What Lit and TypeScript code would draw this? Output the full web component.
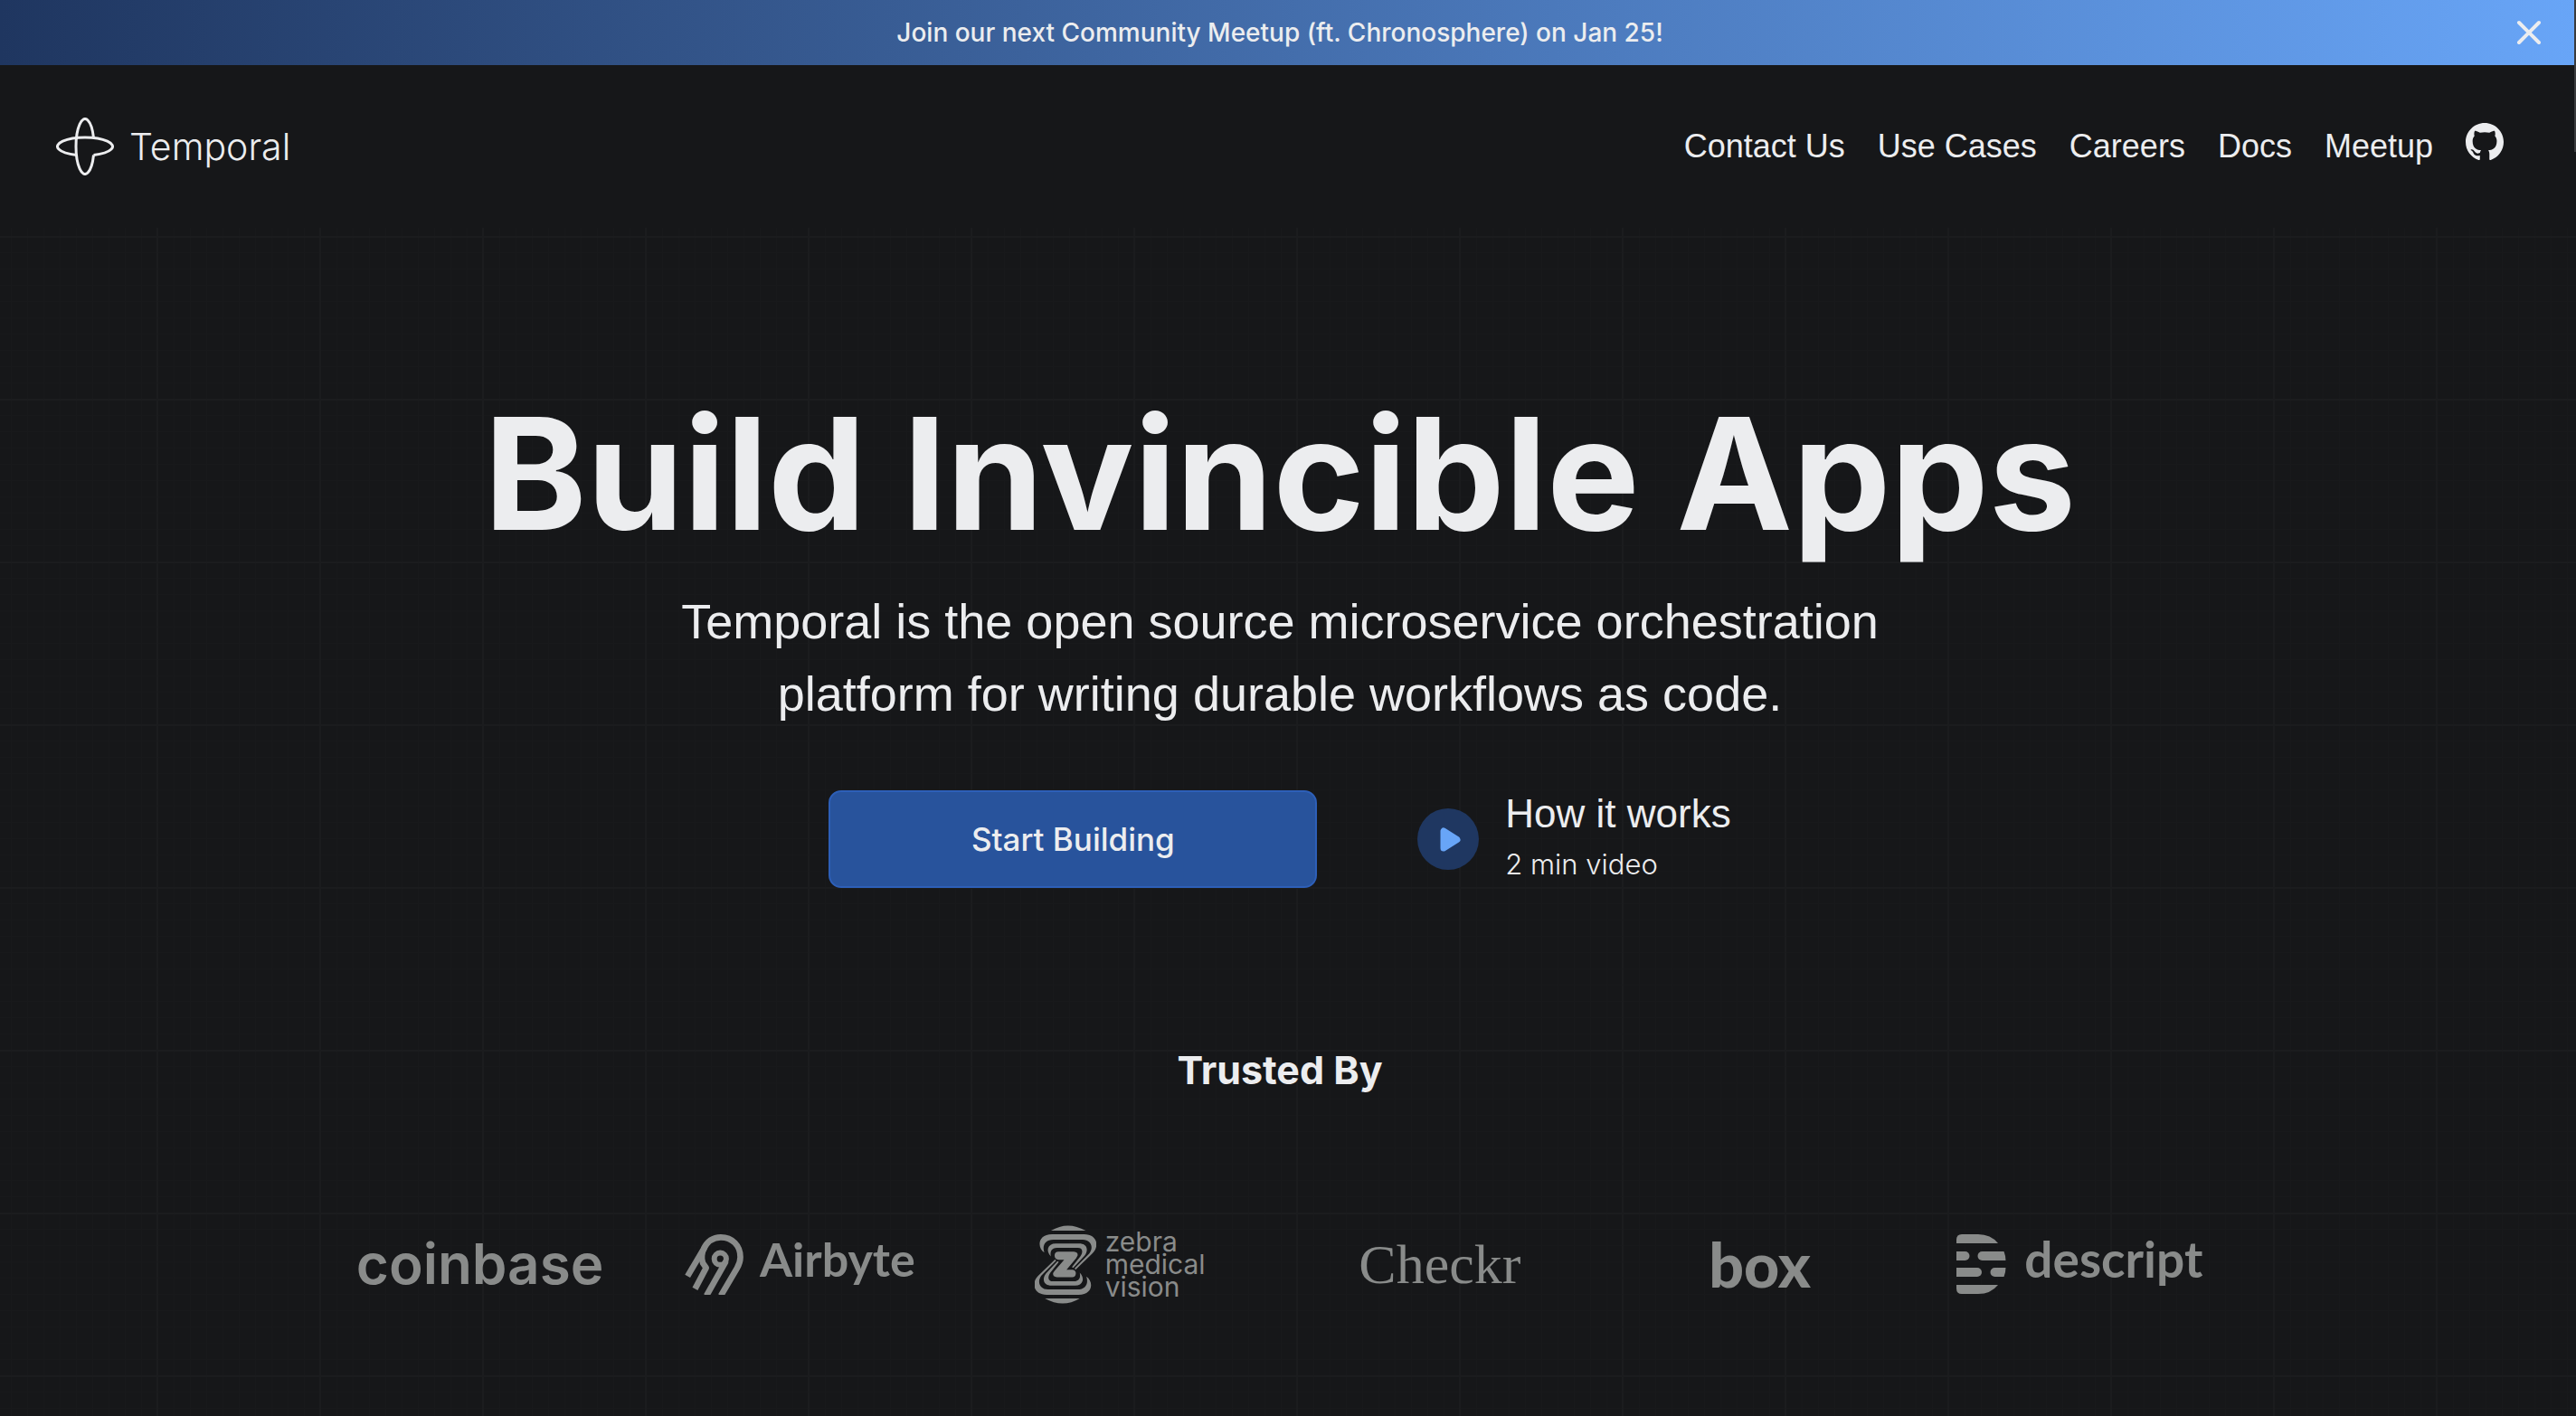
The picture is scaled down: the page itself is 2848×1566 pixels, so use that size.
import { LitElement, html, css, svg } from "lit";
import { customElement, state } from "lit/decorators.js";

const NAV = ["Contact Us", "Use Cases", "Careers", "Docs", "Meetup"];

const temporalMark = svg`<svg class="mark" viewBox="-32 -32 64 64" aria-hidden="true">
  <g fill="none" stroke="currentColor" stroke-width="3">
    <path d="M9.5 9.5A10 30.5 0 1 1 9.5 -9.5" />
    <path d="M-9.5 9.5A30.5 10 0 1 1 9.5 9.5" />
  </g>
</svg>`;

const githubMark = svg`<svg class="github-mark" viewBox="0 0 16 16" aria-hidden="true">
  <path fill="currentColor" d="M8 0C3.58 0 0 3.58 0 8c0 3.54 2.29 6.53 5.47 7.59.4.07.55-.17.55-.38 0-.19-.01-.82-.01-1.49-2.01.37-2.53-.49-2.69-.94-.09-.23-.48-.94-.82-1.13-.28-.15-.68-.52-.01-.53.63-.01 1.08.58 1.23.82.72 1.21 1.87.87 2.33.66.07-.52.28-.87.51-1.07-1.78-.2-3.64-.89-3.64-3.95 0-.87.31-1.59.82-2.15-.08-.2-.36-1.02.08-2.12 0 0 .67-.21 2.2.82.64-.18 1.32-.27 2-.27s1.36.09 2 .27c1.53-1.04 2.2-.82 2.2-.82.44 1.1.16 1.92.08 2.12.51.56.82 1.27.82 2.15 0 3.07-1.87 3.75-3.65 3.95.29.25.54.73.54 1.48 0 1.07-.01 1.93-.01 2.2 0 .21.15.46.55.38A8.01 8.01 0 0 0 16 8c0-4.42-3.58-8-8-8z" />
</svg>`;

const airbyteMark = svg`<svg class="airbyte-mark" viewBox="30 48 195 202" aria-hidden="true">
  <g fill="none" stroke="currentColor" stroke-width="20" stroke-linejoin="round">
    <path d="M39 188L92 98C104 72 124 58 150 58C188 58 215 86 215 124C215 138 211 149 204 161L150 253" />
    <path d="M96 92C86 108 84 130 90 144L101 160L64 230" />
    <path d="M167 138L102 253" />
    <circle cx="148" cy="130" r="20" stroke-width="18" />
  </g>
</svg>`;

const zebraHalf = svg`
  <path d="M84 50Q140 16 200 50Z" />
  <path d="M62 123C38 108 38 62 88 62H194C240 62 246 104 222 126L166 180L163 176L212 126C228 104 216 80 190 80H92C64 80 54 100 62 123Z" />
  <path d="M84 136C66 118 72 93 100 93H178C208 93 210 120 194 136L158 174L154 171L182 136C192 122 190 107 174 107H104C86 107 80 120 84 136Z" />`;

const zebraMark = svg`<svg class="zebra-mark" viewBox="30 33 205 260" aria-hidden="true">
  <g fill="currentColor">
    ${zebraHalf}
    <g transform="rotate(180 132 163)">${zebraHalf}</g>
    <path d="M109 120H160Q175 121 173 133L168 142L136 180H156Q168 182 167 193Q166 205 155 205H104Q90 205 91 192L96 184L128 147H110Q96 145 96 132Q97 120 109 120Z" />
  </g>
</svg>`;

const descriptMark = svg`<svg class="descript-mark" viewBox="0 0 55 66" aria-hidden="true">
  <g fill="currentColor">
    <path d="M0 10V6Q0 0 6 0H24Q38 0 46 10Z" />
    <path d="M0 19H9.500A5 5 0 0 1 9.500 29H0Z" />
    <path d="M28.500 19H52.500Q54.500 24 54.500 29H28.500A5 5 0 0 1 28.500 19Z" />
    <path d="M0 37H23A5 5 0 0 1 23 47H0Z" />
    <path d="M42.500 37H54.500Q54.500 42 52.500 47H42.500A5 5 0 0 1 42.500 37Z" />
    <path d="M0 56H46Q38 66 24 66H6Q0 66 0 60Z" />
  </g>
</svg>`;

@customElement("app-root")
export class AppRoot extends LitElement {
  @state() private bannerOpen = true;

  static styles = css`
    :host {
      --ink: #ecedef;
      --surface: #161719;
      --major: #1b1c1e;
      --minor: #18191b;
      display: block;
      color: var(--ink);
      background: var(--surface);
      font-family: "Liberation Sans", Arial, sans-serif;
    }
    * { box-sizing: border-box; }
    a { color: inherit; text-decoration: none; }
    button { border: 0; padding: 0; background: none; color: inherit; font: inherit; cursor: pointer; }
    svg { display: block; flex: none; }

    .page { position: relative; display: flex; flex-direction: column; min-height: 100vh; overflow: hidden; }
    .scroll-thumb {
      position: absolute; top: 0; right: 0; width: 2px; height: 168px;
      background: #3a3b3d;
    }

    .banner {
      display: grid; grid-template-columns: 64px 1fr 64px; align-items: center;
      height: 72px; padding: 0 20px 0 2px;
      background: linear-gradient(90deg, #1f3660, #68a5f7);
      font-family: Inter, sans-serif; font-size: 28px; font-weight: 500; line-height: 36px;
    }
    .banner-text { grid-column: 2; text-align: center; }
    .close { display: grid; place-items: center; width: 64px; height: 64px; }
    .close svg { width: 28px; height: 28px; }

    .header {
      display: flex; align-items: center; justify-content: space-between;
      height: 180px; padding: 0 80px 0 62px;
    }
    .brand {
      display: flex; align-items: center; gap: 17px;
      font-family: Inter, sans-serif; font-size: 41px; font-weight: 300; line-height: 48px;
    }
    .mark { width: 64px; height: 64px; }
    .nav { display: flex; align-items: center; gap: 36px; font-size: 36px; line-height: 44px; }
    .github { padding-bottom: 10px; }
    .github-mark { width: 42px; height: 42px; }

    .hero {
      flex: 1; display: flex; flex-direction: column; align-items: center;
      padding: 181px 18px 120px 0;
      background-image:
        linear-gradient(90deg, var(--major) 2px, transparent 2px),
        linear-gradient(var(--major) 2px, transparent 2px),
        linear-gradient(90deg, var(--minor) 1px, transparent 1px),
        linear-gradient(var(--minor) 1px, transparent 1px);
      background-size: 180px 180px, 180px 180px, 18px 18px, 18px 18px;
      background-position: 173px 9px, 173px 9px, 12px 9px, 12px 9px;
      text-align: center;
    }
    h1, h2, p { margin: 0; }
    h1, h2 { font-family: Inter, sans-serif; font-weight: 700; }
    h1 { font-size: 172px; line-height: 180px; }
    .lead { max-width: 1400px; margin-top: 34px; font-size: 54px; line-height: 80px; }
    .actions { display: flex; align-items: center; gap: 111px; margin-top: 67px; }
    .start {
      display: grid; place-items: center; width: 540px; height: 108px;
      border: 2px solid #2d5fb8; border-radius: 14px; background: #28539c;
      font-family: Inter, sans-serif; font-size: 35px; font-weight: 500;
    }
    .video { display: flex; align-items: center; gap: 29px; text-align: left; }
    .play { width: 68px; height: 68px; }
    .video-text { display: flex; flex-direction: column; gap: 4px; }
    .video-title { font-size: 44px; line-height: 52px; }
    .video-note { font-family: Inter, sans-serif; font-size: 31px; font-weight: 300; line-height: 52px; }

    h2 { margin-top: 173px; font-size: 43px; line-height: 56px; }
    .logos {
      display: grid; grid-template-columns: repeat(6, 1fr); align-items: center;
      width: 75%; min-height: 88px; margin: 137px 0 0; padding: 0;
      list-style: none; color: #898b8a; white-space: nowrap;
    }
    .logo { display: flex; align-items: center; justify-content: center; line-height: 88px; }
    .coinbase { font-family: Inter, sans-serif; font-size: 62px; font-weight: 600; }
    .airbyte { gap: 18px; font-family: Lato, sans-serif; font-size: 52px; font-weight: 700; }
    .airbyte-mark { width: 65px; height: 67px; }
    .zebra { gap: 10px; font-family: Inter, sans-serif; font-size: 30px; line-height: 25px; }
    .zebra-mark { width: 68px; height: 87px; }
    .zebra-text { display: flex; flex-direction: column; text-align: left; }
    .checkr { font-family: "Liberation Serif", serif; font-size: 62px; }
    .box { font-family: Lato, sans-serif; font-size: 68px; font-weight: 900; }
    .descript { gap: 20px; font-family: Lato, sans-serif; font-size: 55px; font-weight: 700; }
    .descript-mark { width: 55px; height: 66px; }
    .raised { padding-bottom: 12px; }
  `;

  render() {
    return html`
      <div class="page">
        ${this.bannerOpen
          ? html`<div class="banner">
              <a class="banner-text" href="#meetup">Join our next Community Meetup (ft. Chronosphere) on Jan 25!</a>
              <button class="close" aria-label="Close" @click=${() => (this.bannerOpen = false)}>
                <svg viewBox="0 0 28 28" aria-hidden="true">
                  <path d="M3 3L25 25M25 3L3 25" stroke="currentColor" stroke-width="4" stroke-linecap="round" />
                </svg>
              </button>
            </div>`
          : null}
        <header class="header">
          <a class="brand" href="#home">${temporalMark}<span>Temporal</span></a>
          <nav class="nav">
            ${NAV.map((item) => html`<a href="#${item.toLowerCase().replace(" ", "-")}">${item}</a>`)}
            <a class="github" href="#github" aria-label="GitHub">${githubMark}</a>
          </nav>
        </header>
        <main class="hero">
          <h1>Build Invincible Apps</h1>
          <p class="lead">Temporal is the open source microservice orchestration platform for writing durable workflows as code.</p>
          <div class="actions">
            <a class="start" href="#start">Start Building</a>
            <button class="video">
              <svg class="play" viewBox="0 0 68 68" aria-hidden="true">
                <circle cx="34" cy="34" r="34" fill="#1f3761" />
                <path d="M29 25V44L44 34.500Z" fill="#68a5f7" stroke="#68a5f7" stroke-width="7" stroke-linejoin="round" />
              </svg>
              <span class="video-text">
                <span class="video-title">How it works</span>
                <span class="video-note">2 min video</span>
              </span>
            </button>
          </div>
          <h2>Trusted By</h2>
          <ul class="logos">
            <li class="logo coinbase">coinbase</li>
            <li class="logo airbyte">${airbyteMark}<span class="raised">Airbyte</span></li>
            <li class="logo zebra">${zebraMark}<span class="zebra-text"><span>zebra</span><span>medical</span><span>vision</span></span></li>
            <li class="logo checkr">Checkr</li>
            <li class="logo box">box</li>
            <li class="logo descript">${descriptMark}<span class="raised">descript</span></li>
          </ul>
        </main>
        <div class="scroll-thumb"></div>
      </div>
    `;
  }
}
